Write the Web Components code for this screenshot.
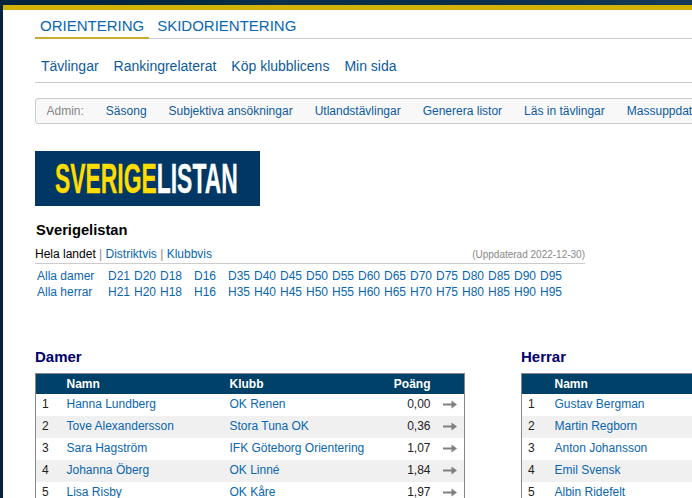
<!DOCTYPE html>
<html lang="sv">
<head>
<meta charset="utf-8">
<title>Sverigelistan</title>
<style>
  html, body { margin: 0; height: 100%; overflow: hidden; }
  html { background: #03233f; }
  body {
    padding: 5px 0 0 3px;
    box-sizing: border-box;
    font-family: "Liberation Sans", Arial, sans-serif;
    font-size: 12px;
    background: linear-gradient(90deg, #03233f 0, #04263f 25%, #0c2f4c 40%, #0a2c48 60%, #123a58 100%) top / 100% 5px no-repeat, #03233f;
  }
  [slot="tables"] { display: flex; gap: 56px; width: 1000px; }
</style>
</head>
<body>
<page-shell>
  <tab-bar></tab-bar>
  <main-nav></main-nav>
  <admin-bar></admin-bar>
  <list-logo></list-logo>
  <list-intro></list-intro>
  <div slot="tables">
    <rank-table heading="Damer" gender="damer" numwidth="32"></rank-table>
    <rank-table heading="Herrar" gender="herrar" numwidth="34"></rank-table>
  </div>
</page-shell>

<script>
const LINK = '#0a66b0';

class PageShell extends HTMLElement {
  constructor() {
    super();
    this.attachShadow({ mode: 'open' });
    this.shadowRoot.innerHTML = `
      <style>
        :host {
          display: block;
          height: 100%;
          background: #fff;
          border-top: 5px solid #d2b200;
          padding-left: 32px;
          box-sizing: border-box;
          overflow: hidden;
        }
        .tables { margin-top: 48px; }
      </style>
      <slot></slot>
      <div class="tables"><slot name="tables"></slot></div>
    `;
  }
}

class TabBar extends HTMLElement {
  constructor() {
    super();
    this.attachShadow({ mode: 'open' });
    this.shadowRoot.innerHTML = `
      <style>
        :host {
          display: flex;
          gap: 3px;
          height: 29px;
          box-sizing: border-box;
          border-bottom: 1px solid #ccc;
          font-size: 15px;
        }
        a {
          padding: 7px 5px 0;
          height: 28px;
          box-sizing: border-box;
          line-height: 18px;
          color: ${LINK};
          text-decoration: none;
        }
        a.active { border-bottom: 2px solid #c9ab2c; height: 29px; }
      </style>
      <a class="active" href="#">ORIENTERING</a>
      <a href="#">SKIDORIENTERING</a>
    `;
  }
}

class MainNav extends HTMLElement {
  constructor() {
    super();
    this.attachShadow({ mode: 'open' });
    const items = ['Tävlingar', 'Rankingrelaterat', 'Köp klubblicens', 'Min sida'];
    this.shadowRoot.innerHTML = `
      <style>
        :host {
          display: flex;
          gap: 15px;
          height: 44px;
          box-sizing: border-box;
          border-bottom: 1px solid #ccc;
          padding: 18px 0 0 6px;
          font-size: 14px;
          line-height: 18px;
        }
        a { color: #0d5aa0; text-decoration: none; }
      </style>
      ${items.map((item) => `<a href="#">${item}</a>`).join('')}
    `;
  }
}

class AdminBar extends HTMLElement {
  constructor() {
    super();
    this.attachShadow({ mode: 'open' });
    const items = ['Säsong', 'Subjektiva ansökningar', 'Utlandstävlingar', 'Generera listor', 'Läs in tävlingar', 'Massuppdatera'];
    this.shadowRoot.innerHTML = `
      <style>
        :host {
          display: flex;
          gap: 22px;
          width: 720px;
          height: 26px;
          margin-top: 15px;
          box-sizing: border-box;
          border: 1px solid #ccc;
          border-radius: 3px;
          background: #f8f8f8;
          padding-left: 10.5px;
          font-size: 12px;
          line-height: 24px;
          white-space: nowrap;
        }
        span { color: #888; }
        a { color: #0d5aa0; text-decoration: none; }
      </style>
      <span>Admin:</span>
      ${items.map((item) => `<a href="#">${item}</a>`).join('')}
    `;
  }
}

class ListLogo extends HTMLElement {
  constructor() {
    super();
    this.attachShadow({ mode: 'open' });
    this.shadowRoot.innerHTML = `
      <style>
        :host {
          display: block;
          width: 225px;
          height: 55px;
          margin-top: 27px;
          background: #003764;
          overflow: hidden;
        }
        .word {
          display: inline-block;
          margin-left: 20px;
          font: bold 42px/55px "Liberation Sans", Arial, sans-serif;
          white-space: nowrap;
          transform: scaleX(0.545);
          transform-origin: 0 50%;
          -webkit-text-stroke: 0.35px currentColor;
          color: #fff;
        }
        b { color: #ffdd00; }
      </style>
      <span class="word"><b>SVERIGE</b>LISTAN</span>
    `;
  }
}

class ListIntro extends HTMLElement {
  constructor() {
    super();
    this.attachShadow({ mode: 'open' });
    const ages = ['21', '20', '18', null, '16', null, '35', '40', '45', '50', '55', '60', '65', '70', '75', '80', '85', '90', '95'];
    const row = (label, letter) => {
      const cells = ages.map((age) =>
        age ? `<a class="age" href="#">${letter}${age}</a>` : '<i></i>').join('');
      return `<a class="all" href="#">${label}</a>${cells}`;
    };
    this.shadowRoot.innerHTML = `
      <style>
        :host {
          display: block;
          width: 550px;
          font-size: 12px;
        }
        a { color: ${LINK}; text-decoration: none; }
        h2 {
          margin: 15px 0 0 1px;
          font-size: 14.7px;
          line-height: 18px;
          color: #000;
        }
        .sub {
          display: flex;
          justify-content: space-between;
          align-items: baseline;
          margin-top: 5px;
          height: 20px;
          line-height: 20px;
          box-sizing: border-box;
          border-bottom: 1px solid #ccc;
        }
        .sub small { font-size: 10px; color: #888; }
        .sep { color: #888; }
        .ages {
          display: grid;
          grid-template-columns: 71px repeat(3, 26px) 8px 26px 8px repeat(13, 26px);
          margin: 4px 0 0 2px;
          line-height: 16px;
          white-space: nowrap;
        }
      </style>
      <h2>Sverigelistan</h2>
      <div class="sub">
        <span>Hela landet <span class="sep">|</span> <a href="#">Distriktvis</a> <span class="sep">|</span> <a href="#">Klubbvis</a></span>
        <small>(Uppdaterad 2022-12-30)</small>
      </div>
      <div class="ages">
        ${row('Alla damer', 'D')}
        ${row('Alla herrar', 'H')}
      </div>
    `;
  }
}

const RANKS = {
  damer: [
    ['Hanna Lundberg', 'OK Renen', '0,00'],
    ['Tove Alexandersson', 'Stora Tuna OK', '0,36'],
    ['Sara Hagström', 'IFK Göteborg Orientering', '1,07'],
    ['Johanna Öberg', 'OK Linné', '1,84'],
    ['Lisa Risby', 'OK Kåre', '1,97'],
  ],
  herrar: [
    ['Gustav Bergman', 'OK Ravinen', '0,00'],
    ['Martin Regborn', 'OK Hällen', '0,36'],
    ['Anton Johansson', 'Rehns BK', '1,07'],
    ['Emil Svensk', 'Stora Tuna OK', '1,84'],
    ['Albin Ridefelt', 'Södertälje-Nykvarn', '1,97'],
  ],
};

class RankTable extends HTMLElement {
  constructor() {
    super();
    this.attachShadow({ mode: 'open' });
  }

  connectedCallback() {
    const rows = RANKS[this.getAttribute('gender')] || [];
    const numWidth = Number(this.getAttribute('numwidth')) || 32;
    const arrow = `<svg width="14" height="9" viewBox="0 0 14 9"><path d="M0 3.5h8.5V0.5l5.5 4-5.5 4V5.5H0z" fill="#808080"/></svg>`;
    this.shadowRoot.innerHTML = `
      <style>
        :host {
          display: block;
          flex: none;
          width: 430px;
          font-size: 12px;
        }
        h3 {
          margin: 0 0 7px;
          font-size: 15px;
          line-height: 18px;
          color: #00006e;
        }
        table {
          width: 430px;
          box-sizing: border-box;
          table-layout: fixed;
          border-collapse: collapse;
          border: 1px solid #888;
          border-bottom: 0;
        }
        th {
          height: 20px;
          padding: 0;
          box-sizing: border-box;
          background: #00416a;
          color: #fff;
          text-align: left;
        }
        td { height: 22px; padding: 0 0 2px; box-sizing: border-box; white-space: nowrap; color: #222; }
        tr:nth-child(even) td { background: #f0f0f0; }
        .n { padding-left: 6px; }
        a { color: ${LINK}; text-decoration: none; }
        th.p, td.p { text-align: right; }
        svg { display: block; margin: 2px 0 0 12px; }
      </style>
      <h3>${this.getAttribute('heading')}</h3>
      <table>
        <colgroup>
          <col style="width:${numWidth - 1}px">
          <col style="width:163px">
          <col style="width:${192 - numWidth}px">
          <col>
          <col style="width:34px">
        </colgroup>
        <thead><tr><th></th><th>Namn</th><th>Klubb</th><th class="p">Poäng</th><th></th></tr></thead>
        <tbody>
          ${rows.map((r, i) => `
            <tr>
              <td class="n">${i + 1}</td>
              <td><a href="#">${r[0]}</a></td>
              <td><a href="#">${r[1]}</a></td>
              <td class="p">${r[2]}</td>
              <td>${arrow}</td>
            </tr>`).join('')}
        </tbody>
      </table>
    `;
  }
}

customElements.define('page-shell', PageShell);
customElements.define('tab-bar', TabBar);
customElements.define('main-nav', MainNav);
customElements.define('admin-bar', AdminBar);
customElements.define('list-logo', ListLogo);
customElements.define('list-intro', ListIntro);
customElements.define('rank-table', RankTable);
</script>
</body>
</html>
